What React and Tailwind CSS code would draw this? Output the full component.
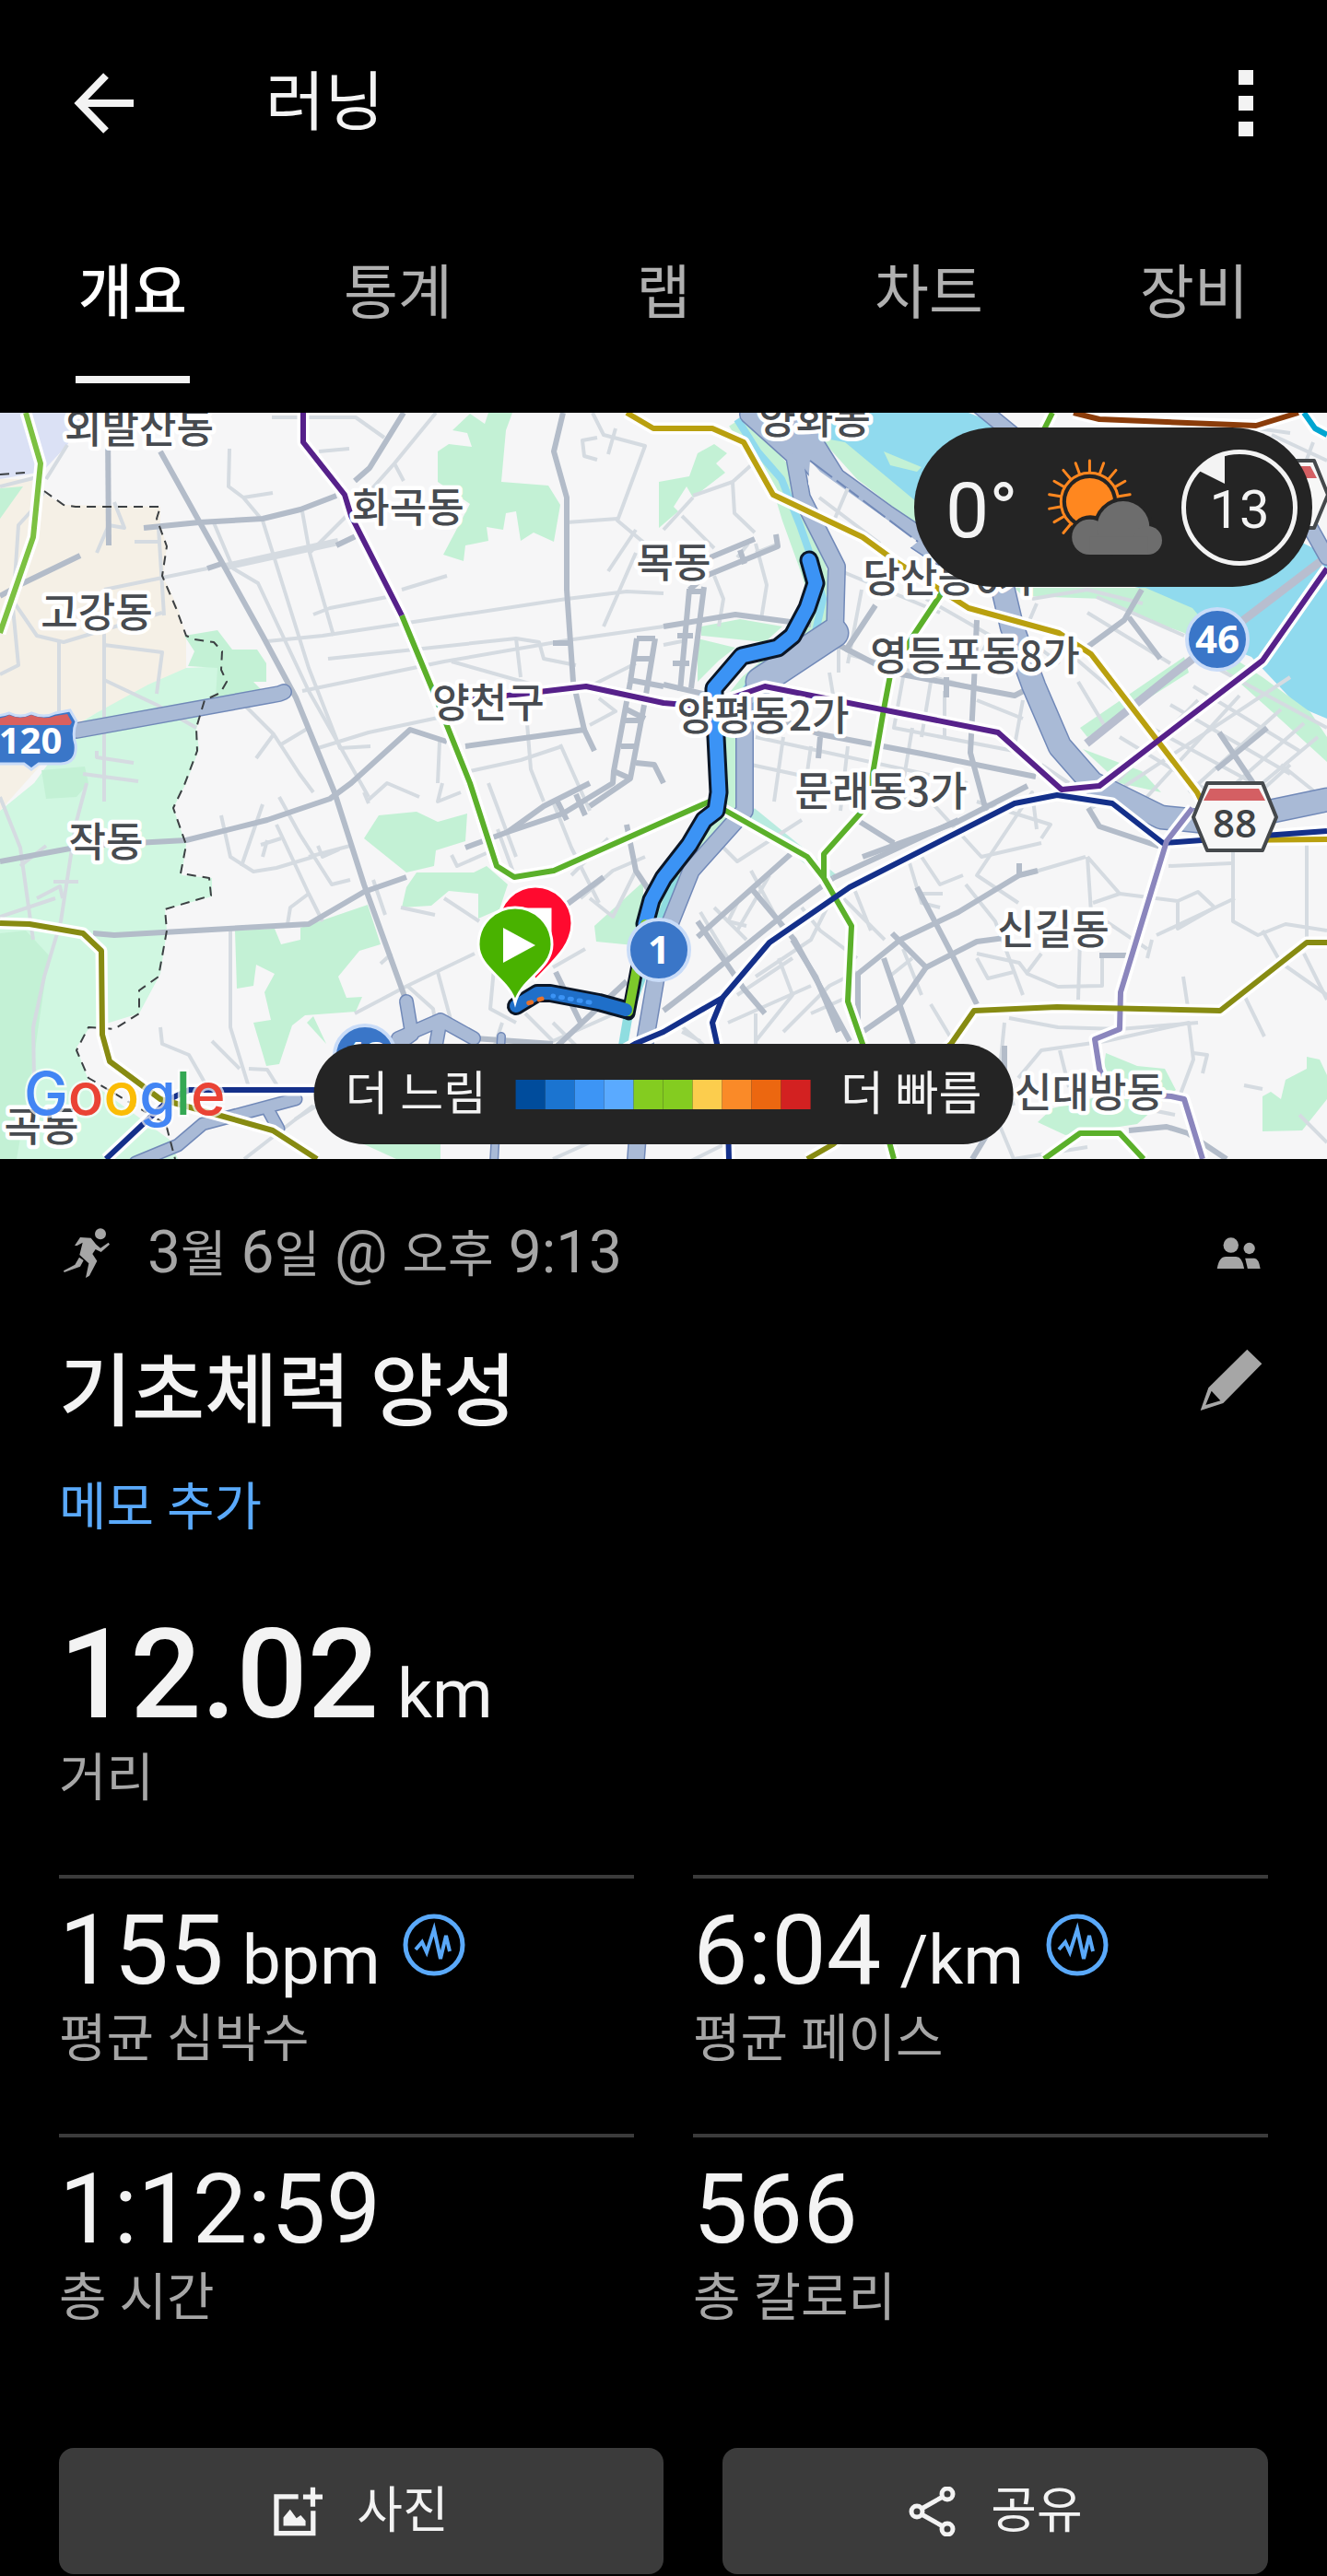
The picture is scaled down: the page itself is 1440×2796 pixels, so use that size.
import { useState } from "react";

const TABS = ["개요", "통계", "랩", "차트", "장비"];

const PACE_COLORS = [
  "#004c9c",
  "#1b74d0",
  "#3d95f5",
  "#5aaaff",
  "#84cc20",
  "#84cc20",
  "#fccd4d",
  "#fa8a28",
  "#ec6710",
  "#d32121",
];

// ---- map data (y starts at 448, the top edge of the map view) ----

const AREAS = [
  ["#dbe1f5", "0,448 92,448 73,483 46,512 0,520"],
  ["#f5f0e6", "0,520 46,520 50,537 69,548 174,550 174,570 181,593 177,627 184,640 193,660 202,690 202,730 161,747 106,773 83,787 0,880"],
  ["#d0f7e1", "161,743 202,725 248,723 239,753 216,773 213,793 216,813 202,850 188,877 202,917 197,950 230,953 230,973 179,987 181,1010 174,1057 151,1100 96,1117 83,1137 96,1173 184,1237 193,1258 0,1258 0,880 37,850 83,787 106,773"],
  ["#c3f1d5", "200,690 236,684 252,705 279,705 289,720 289,740 275,740 285,750 234,757 236,725 204,723 211,707"],
  ["#c3f1d5", "0,530 25,528 0,563"],
  ["#c3f1d5", "45,836 92,832 96,850 83,865 50,867"],
  ["#c3f1d5", "0,1013 28,1010 53,1037 34,1167 18,1258 0,1258"],
  ["#c3f1d5", "491,467 510,449 526,460 530,448 556,448 549,467 544,523 595,527 608,548 601,588 579,578 565,587 560,555 549,557 546,575 528,572 530,587 505,592 503,609 481,602 510,547 475,523 475,490 487,482 512,485 507,470"],
  ["#c3f1d5", "715,523 748,517 757,492 775,482 789,492 777,503 787,513 752,540 745,528 731,550 736,555 715,573"],
  ["#c3f1d5", "395,910 411,885 452,881 475,892 507,883 505,913 473,923 471,940 441,947"],
  ["#c3f1d5", "452,947 514,947 528,940 551,960 542,987 519,997 519,970 487,967 468,983 436,985 441,963"],
  ["#c3f1d5", "255,1010 298,1008 305,1025 326,1020 326,1007 399,982 413,1025 390,1032 367,1060 376,1083 393,1082 386,1098 331,1102 317,1113 303,1155 289,1157 275,1110 294,1107 287,1077 298,1057 278,1047 275,1070 257,1073"],
  ["#c3f1d5", "333,1110 340,1103 354,1133"],
  ["#c3f1d5", "645,1005 698,957 698,1027 647,1022"],
  ["#c3f1d5", "1200,1143 1234,1157 1264,1160 1276,1183 1234,1220 1156,1232 1126,1218 1142,1203 1193,1190"],
  ["#c3f1d5", "1370,1190 1379,1185 1390,1193 1395,1172 1418,1160 1418,1147 1432,1150 1440,1167 1440,1193 1413,1227 1370,1228"],
  ["#c3f1d5", "395,1242 478,1242 478,1258 430,1258"],
  ["#c3f1d5", "761,680 803,672 849,680 830,697 761,690"],
  ["#c3f1d5", "757,693 798,703 780,717 757,740"],
  ["#90daee", "899,448 1051,448 1115,473 1317,540 1429,597 1440,607 1440,780 1409,767 1358,713 1294,687 1243,640 1115,607 995,547 917,500 894,470"],
  ["#c3f1d5", "890,475 917,480 995,545 995,570 930,520 903,490"],
  ["#c3f1d5", "959,490 1000,507 995,512 966,505"],
  ["#c3f1d5", "1101,638 1243,638 1294,660 1340,715 1370,735 1422,773 1440,800 1440,827 1381,773 1344,740 1285,687 1239,670 1198,650 1110,647"],
  ["#c3f1d5", "1285,713 1290,730 1180,800 1172,790"],
  ["#c3f1d5", "1175,813 1239,837 1260,860 1215,850"],
];

const MINOR_ROADS = [
  "M295,453 H386 L417,475",
  "M249,487 L248,528 L264,540 L285,565 L335,725 L369,812 L402,810",
  "M264,540 L296,535 M346,490 L379,487",
  "M473,448 L428,503 L404,530 M428,503 L438,522",
  "M0,528 L44,517 M50,520 L73,483",
  "M48,533 L40,548 L20,570 L14,660 L20,722 L0,732",
  "M16,655 L40,690 L69,697 L115,683 L176,665",
  "M64,697 V775 M113,665 V870 M113,700 L176,708 L170,753",
  "M113,738 L170,765 L213,790",
  "M113,640 L225,617 M172,573 L178,668",
  "M105,600 L118,570 L135,573 L124,545 M146,588 H172",
  "M231,565 L253,617 L280,633 L335,750 L400,865",
  "M328,555 L336,600 L362,690 M336,600 L381,555",
  "M340,667 L358,660 L420,648 M436,640 L485,625",
  "M290,696 L350,690 L615,650 L680,642 L720,644",
  "M356,715 L560,693 L585,697 L590,715 L625,722",
  "M328,750 L482,718 L615,695 L720,680",
  "M490,718 L610,752 M560,693 L565,735",
  "M265,765 L297,797 L325,840 L340,860 M297,797 L278,823",
  "M345,812 L400,795 L480,778 M305,808 L335,790",
  "M660,620 L690,575 M655,680 L690,600",
  "M643,448 L655,472 L700,484 L670,565 L700,590",
  "M615,567 L670,563 M668,465 L660,493 M648,475 L632,478 L634,495 L648,499",
  "M477,805 L475,850 M572,785 L576,835 L590,870",
  "M510,837 L565,825 L610,810 M608,808 L640,880",
  "M640,787 L668,772 L650,758",
  "M690,720 L640,745 M105,815 V822 L145,828 M90,840 L150,848",
  "M94,850 L82,895 L66,1000 L48,1060 L36,1115 L37,1170",
  "M0,865 L22,920 L36,1020 M22,940 L50,918",
  "M0,995 L60,975 M40,975 L65,962 L68,975 M58,957 H85",
  "M250,1005 V1115 L270,1180 M174,1115 L176,1133 L205,1145 L225,1180",
  "M270,1160 L290,1161 L305,1185 M240,885 L250,930 L275,946 L300,942 L340,930",
  "M285,873 L262,940 M283,917 L305,910 M285,930 L290,912",
  "M300,895 L335,970 L350,1000 M335,930 L380,918",
  "M303,865 L325,905 L360,960 L380,955 M345,918 L350,930 L368,922",
  "M335,970 L315,985 L312,1003 M405,955 L418,993",
  "M435,985 L472,993 M482,975 L520,1000 M385,1100 L442,1070 L515,1035",
  "M442,1070 L470,1095 L475,1125 M475,1055 L490,1110",
  "M413,1046 L425,1035 M537,1040 L532,1095 L560,1110",
  "M545,1110 L535,1140 L590,1145 M600,1110 L630,1140",
  "M570,1100 L600,1130 L690,1090 M480,850 L475,870 L500,860",
  "M490,928 L496,940 L530,925 M540,900 L560,955",
  "M600,870 L620,920 L650,980 M620,950 L660,910",
  "M630,975 L665,945 L700,930 M640,975 L665,995 L690,945",
  "M600,1050 L635,1030 M530,850 L560,930",
  "M400,868 L420,850 L455,865 M395,860 L400,872",
  "M720,575 L752,540 M740,560 L775,595 M795,523 L797,557 L819,578",
  "M752,538 L795,523 L815,505 M720,700 L745,695",
  "M775,625 L785,650 L780,680 M820,590 L832,635 L826,672",
  "M800,605 L812,590 M845,590 L820,600",
  "M913,620 L1020,665 M935,640 L920,720 M920,710 L1050,745",
  "M900,730 L905,760 L945,770 M910,690 V730",
  "M1005,650 L1075,690 L1060,720 M1075,640 L1100,690",
  "M1120,650 L1180,640 L1240,655 M1125,655 L1110,690 L1150,720",
  "M1190,648 L1285,690 M1180,665 L1270,720",
  "M820,800 L1050,850 M815,830 L1000,870 M850,800 L840,870",
  "M880,810 L870,880 M920,810 L912,880 M990,790 L980,850",
  "M980,735 L970,790 L1100,815 L1110,760",
  "M1010,740 L1000,800 M1025,750 V800 M1060,760 L1110,780",
  "M1180,880 L1400,735 M1215,800 L1330,870 M1240,785 L1360,850",
  "M1270,765 L1400,840 M1295,745 L1410,815 M1320,725 L1440,790",
  "M1210,850 L1300,760 M1240,870 L1345,755 M1290,860 L1390,770",
  "M1330,860 L1415,785 M1370,850 L1430,800 M1150,700 L1220,760",
  "M1120,760 L1170,830 M1130,830 L1160,850 M1170,740 L1200,790",
  "M1390,830 L1440,870 M1345,880 L1400,830",
  "M1125,900 L1120,860 L1060,950 L1105,980",
  "M1060,870 L1140,895 L1130,910 M1048,960 L1080,1000 L1110,1080",
  "M1000,930 L1020,960 L1045,950 M1010,870 L1065,930 L1130,915",
  "M1180,930 L1186,1020 M1178,930 L1110,950 M1180,930 L1215,970",
  "M1186,980 L1215,970 L1278,978 L1300,968 L1318,985 L1278,1008 V978",
  "M1338,925 V1000 L1365,1015 L1395,1003 L1440,1010",
  "M1268,940 L1336,937 M1418,915 V1020 M1370,1010 L1390,1045 L1440,1080",
  "M1255,1015 L1340,975 M1250,1020 L1245,1040 M1200,1000 L1245,1030",
  "M1060,1035 L1106,1045 L1115,1057 L1148,1071 L1196,1070 V1037",
  "M1172,1020 L1170,1085 M1060,1040 L1072,1062 L1100,1055 M1115,1055 L1130,1035",
  "M1095,1105 L1148,1115 L1215,1117 L1300,1110 M1090,1110 L1085,1160 L1100,1200",
  "M1105,1170 L1130,1140 L1200,1130 L1290,1110 L1295,1150 L1280,1190",
  "M1150,1140 L1160,1180 M1295,1143 L1310,1145 L1305,1165",
  "M1284,1060 L1290,1100 M1350,1080 L1372,1125 M1415,1035 L1440,1085",
  "M1080,1210 L1100,1258 L1180,1245 M1350,1178 L1370,1182",
  "M1250,1205 L1275,1210 M1410,1210 L1440,1240",
  "M785,920 L800,935 L870,890 M760,990 L790,1040 M775,985 L810,1020",
  "M815,945 L850,1010 M835,950 L800,1010 M800,980 L790,1000 L810,1005",
  "M870,985 L890,1010 L930,1040 M905,965 L960,1020 M925,960 L945,1010",
  "M820,1060 L880,1020 L900,980 M800,1080 L860,1040 M845,1040 L860,1080 L820,1130",
  "M790,1110 L880,1070 M880,1100 L925,1080 M820,1100 V1135",
  "M850,1120 L900,1070 L930,1055 M735,1110 L770,1140 M740,1120 L760,1130",
  "M980,1030 L1000,1080 M1010,1090 L1040,1140 M965,1060 L990,1040",
  "M985,930 L1000,980 L1020,985 M1000,970 H1023",
  "M750,1260 L800,1235 M600,1258 L640,1240 M360,1190 L320,1215",
  "M265,1258 L340,1200 M230,1130 L260,1160 M300,1180 L320,1185",
  "M1380,472 L1440,500 M1425,480 L1410,520 M1330,460 L1400,470",
];

const MAJOR_ROADS = [
  "M117,467 L118,592",
  "M174,490 L239,607 L285,690 L321,757 L363,860 L395,960 L441,1087",
  "M0,935 L92,918 L202,912 L290,890 L358,867 L381,850 L445,792 L485,805",
  "M505,810 L634,792 L645,815",
  "M611,448 L601,490 L615,540 L615,640 L622,740 L634,792",
  "M156,573 L216,567 L285,563 L326,553 L365,538",
  "M385,522 L401,508 L438,448",
  "M0,647 L25,633 L87,603",
  "M365,592 L386,582 M225,617 L240,612 M600,698 H620",
  "M101,1013 L124,1015 L335,1003 L395,968 L441,952",
  "M505,920 L551,903 L611,883 L665,850 L666,837",
  "M551,903 L590,875 L640,850 M680,770 L700,780",
  "M691,693 L684,740 L666,837 L684,845",
  "M711,693 L700,760 L684,845 L640,875 M691,693 H711",
  "M687,715 H707 M683,738 L720,745 M678,782 H697 M674,810 H692 M690,828 L710,830 L720,850",
  "M605,870 L615,890 M625,862 L635,885",
  "M597,995 L655,952 M680,895 L690,945 L710,975",
  "M603,1055 L630,1110 M680,1065 L605,1135 M515,1127 L600,1133",
  "M766,607 L819,585 M766,625 L844,593 L842,580 M803,597 L808,612 M766,625 L748,640",
  "M748,640 L738,750 M764,637 L750,747 M745,642 H764 M735,690 H752 M730,720 H748",
  "M720,680 L798,667 L880,678",
  "M720,743 L780,757 L890,797 L1000,818 L1124,843",
  "M1060,673 L1057,740 L1053,817 L1070,880",
  "M910,700 L968,730 L1101,755 L1124,743",
  "M1239,640 L1220,673 L1179,703 M1225,670 L1259,715",
  "M950,657 L917,707 M1027,735 V757",
  "M890,800 L888,823 M1323,795 L1370,865 M1375,790 L1320,835",
  "M936,930 L1037,893 L1115,853 M930,890 L970,915",
  "M904,953 L1040,890",
  "M720,1097 L755,1070 L860,985 L904,953",
  "M858,927 L757,1017 M816,965 L862,1020 L895,1080 L922,1130",
  "M757,1000 L807,1073 L830,1100 M860,1020 L885,1060 L910,1120",
  "M995,963 L1030,1030 L1060,1090",
  "M1106,937 V950 L1040,990 L977,1020 L931,1057 V1117 M1106,950 L1126,945",
  "M959,1040 L991,1133 M968,1013 L1005,1050 L1060,1022 L1090,1018",
  "M1005,1050 L975,1093 L936,1120",
  "M1181,877 L1193,897 L1262,920 M1193,1037 H1230",
  "M1225,1227 L1266,1223 L1289,1230 L1331,1258",
  "M1090,1135 V1165 M1055,1258 L1075,1225",
];

const HIGHWAYS = [
  ["M812,450 L862,495 L870,540 L908,615 L906,687 L830,735 L808,760 L808,880 L750,945 L728,1000 L712,1060 L700,1130 L690,1258", 17],
  ["M820,435 L880,480 L905,520 L960,560 L1020,600 L1085,625 L1098,680 L1122,745 L1150,810 L1185,850 L1260,887 L1320,893 L1440,868", 24],
  ["M862,470 L905,525", 30],
  ["M905,687 L825,740", 30],
  ["M1055,435 L1110,480", 15],
  ["M1412,555 L1440,605", 15],
  ["M83,793 L303,753 L308,751", 15],
  ["M441,1087 L447,1123 L430,1135", 13],
  ["M432,1127 L478,1107 L514,1127 M478,1107 L472,1140", 13],
  ["M147,1262 L193,1243 L220,1220 L321,1193 M290,1203 L302,1225", 12],
  ["M544,1125 L536,1262", 7],
];

const SUBWAYS = [
  ["#7cc142", "28,448 44,503 36,583 0,687"],
  ["#b9a00f", "680,448 709,465 773,465 807,480 839,537 936,583 973,610 1051,660 1149,687 1184,710 1299,860 1325,912 1440,911"],
  ["#5bb02a", "1142,448 1130,472"],
  ["#8a3c0a", "1165,448 1193,455 1363,462 1409,448"],
  ["#00a5d1", "1415,448 1427,465 1440,472"],
  ["#5bb02a", "1023,642 991,690 966,733 959,770 947,840 936,880 894,927 894,953"],
  ["#5bb02a", "436,668 470,750 510,850 539,940 558,952 601,945 720,892 770,870 876,930 894,953 924,1005 920,1087 936,1133 970,1258"],
  ["#56218a", "482,763 636,745 720,763 766,767 830,745 1083,795 1152,857 1193,853 1370,717 1440,617"],
  ["#56218a", "329,448 329,480 374,537 381,560 436,668"],
  ["#14308a", "115,1258 184,1193 205,1183 340,1183 600,1183 689,1133 720,1120 784,1083 835,1023 922,963 1101,872 1147,863 1207,872 1262,915 1440,902"],
  ["#14308a", "784,1083 773,1110 789,1183 791,1258"],
  ["#8b86bd", "1294,877 1266,913 1216,1077 1215,1117 1188,1128 1193,1160 1203,1185 1271,1190 1285,1193 1305,1258"],
  ["#878b12", "0,1002 32,1003 90,1013 110,1032 111,1123 119,1152 174,1193 243,1212 296,1227 344,1258"],
  ["#878b12", "876,1258 904,1242 1032,1133 1057,1097 1147,1093 1324,1097 1418,1023 1440,1023"],
  ["#5bb02a", "1133,1258 1172,1230 1215,1230 1241,1258"],
];

const BORDER =
  "M0,515 L28,513 M48,533 L69,548 L82,550 H174 L170,563 L181,593 L176,625 L191,660 L202,690 L211,694 L232,697 L241,707 L240,727 L246,740 L239,752 L222,760 L213,790 L214,815 L200,852 L188,877 L202,917 L196,948 L227,953 L229,972 L179,987 L181,1010 L172,1060 L151,1075 V1100 L124,1117 L96,1115 L83,1140 L96,1170 L180,1220 L190,1258";

const PLACES = [
  ["외발산동", 151, 481],
  ["화곡동", 443, 567],
  ["고강동", 105, 681],
  ["양천구", 530, 779],
  ["목동", 731, 627],
  ["작동", 115, 930],
  ["곡동", 45, 1239],
  ["양화동", 884, 471],
  ["당산동6가", 1030, 643],
  ["영등포동8가", 1058, 728],
  ["양평동2가", 828, 793],
  ["문래동3가", 956, 875],
  ["신길동", 1143, 1025],
  ["신대방동", 1182, 1202],
];

const ROUTE =
  "M878,608 L885,633 L876,660 L860,690 L844,703 L805,712 L775,747 V760 L780,860 L777,880 L764,890 L748,917 L720,953 L707,977 L700,1003";
const ROUTE_SLOW = "M679,1096 L650,1088 L597,1078 L583,1078 L560,1092";

function RoundShield({ x, y, children }) {
  return (
    <g>
      <circle cx={x} cy={y} r="33" fill="#3a76c8" stroke="#c9dcf8" strokeWidth="4" />
      <text
        x={x}
        y={y + 15}
        textAnchor="middle"
        fill="#fff"
        className="font-['Open_Sans',sans-serif] text-[42px] font-bold"
      >
        {children}
      </text>
    </g>
  );
}

function HexShield({ x, y, children }) {
  return (
    <g transform={`translate(${x} ${y})`}>
      <path
        d="M-30,-37 H30 L45,0 L30,36 H-30 L-45,0Z"
        fill="#f7f7f7"
        stroke="#45494c"
        strokeWidth="4"
        strokeLinejoin="round"
      />
      <path d="M-27,-31 H26 L33,-18 H-34Z" fill="#d45f63" />
      <text
        y="22"
        textAnchor="middle"
        fill="#3f4346"
        className="font-['Open_Sans',sans-serif] text-[42px] font-semibold"
      >
        {children}
      </text>
    </g>
  );
}

function RouteMap() {
  return (
    <svg viewBox="0 448 1440 810" className="block w-full bg-[#f6f6f7]" aria-label="지도">
      {AREAS.map(([color, points]) => (
        <polygon key={points} points={points} fill={color} />
      ))}

      <g fill="none" strokeLinejoin="round">
        {/* stream and its banks */}
        <path
          d="M803,455 L825,490 L850,520 L862,560 L880,610 L893,650 L882,690 L850,715 L815,745 L795,770 L792,850 L780,890 L730,960 L712,1010"
          stroke="#c3f1d5"
          strokeWidth="28"
        />
        <path
          d="M800,455 L822,490 L848,520 L868,570 L882,610 L893,650 L884,690 L850,712 L815,740 L798,765"
          stroke="#90daee"
          strokeWidth="8"
        />
        <path d="M735,950 L718,995 L700,1050 L682,1100 L676,1135" stroke="#8fdde0" strokeWidth="10" />
        <path d="M815,882 L880,935 L905,955" stroke="#b9ebe0" strokeWidth="12" />

        <g stroke="#d5dbe1" strokeWidth="4">
          {MINOR_ROADS.map((d) => (
            <path key={d} d={d} />
          ))}
        </g>
        <path d="M245,615 L367,588" stroke="#d5dbe1" strokeWidth="8" />
        <g stroke="#b3bcc9" strokeWidth="6">
          {MAJOR_ROADS.map((d) => (
            <path key={d} d={d} />
          ))}
        </g>
        <path d="M1436,607 L1271,733 L1179,807" stroke="#b8becf" strokeWidth="9" />

        {/* expressways: outline first, then fill */}
        {HIGHWAYS.map(([d, w]) => (
          <path key={d} d={d} stroke="#7189b8" strokeWidth={w + 3} strokeLinecap="round" />
        ))}
        {HIGHWAYS.map(([d, w]) => (
          <path key={d} d={d} stroke="#a9bad6" strokeWidth={w} strokeLinecap="round" />
        ))}
        {/* blocks between the two carriageways */}
        <path
          d="M879,500 L890,512 L996,588 L975,605 L930,578 L893,560 L877,525Z"
          fill="#f6f6f7"
        />
        <path d="M879,500 L996,588" stroke="#7189b8" strokeWidth="2" strokeDasharray="30 6" />
        <path d="M889,540 L955,590 M920,530 L905,565" stroke="#d5dbe1" strokeWidth="4" />

        <path d={BORDER} stroke="#3c4043" strokeWidth="2" strokeDasharray="10 7" />

        {SUBWAYS.map(([, points]) => (
          <polyline key={points} points={points} stroke="#fff" strokeWidth="13" />
        ))}
        {SUBWAYS.map(([color, points]) => (
          <polyline key={points} points={points} stroke={color} strokeWidth="6" />
        ))}

        {/* recorded route */}
        <g strokeLinecap="round">
          <path d={ROUTE} stroke="#0b1626" strokeWidth="21" />
          <path d="M701,1000 L682,1100" stroke="#0b1626" strokeWidth="15" />
          <path d={ROUTE_SLOW} stroke="#0b1626" strokeWidth="20" />
          <path d={ROUTE} stroke="#3b93f5" strokeWidth="15" />
          <path d="M700,1003 L682,1098" stroke="#7cc92b" strokeWidth="10" />
          <path d={ROUTE_SLOW} stroke="#1f6fc9" strokeWidth="14" />
          <path d="M640,1088 L600,1081" stroke="#3b93f5" strokeWidth="5" strokeDasharray="2 8" />
          <path d="M588,1084 L570,1090" stroke="#e8722a" strokeWidth="5" strokeDasharray="3 9" />
        </g>
      </g>

      {PLACES.map(([name, x, y]) => (
        <text
          key={name}
          x={x}
          y={y}
          textAnchor="middle"
          fill="#474b50"
          stroke="#fff"
          strokeWidth="9"
          strokeLinejoin="round"
          paintOrder="stroke"
          className="font-['Noto_Sans_CJK_KR',sans-serif] text-[44px] font-medium"
        >
          {name}
        </text>
      ))}

      {/* road shields */}
      <path
        d="M-14,776 Q0,778 10,774 Q22,780 34,774 Q48,780 60,774 L76,771 L83,783 Q78,795 82,808 Q84,828 66,829 L42,829 L34,835 L26,829 H-14Z"
        fill="#3a76c8"
        stroke="#c9dcf8"
        strokeWidth="3"
      />
      <path d="M-14,778 Q0,782 10,776 Q22,782 34,776 Q48,782 60,777 L73,775 L78,784 L76,787 H-14Z" fill="#d9605f" />
      <text
        x="33"
        y="818"
        textAnchor="middle"
        fill="#fff"
        className="font-['Open_Sans',sans-serif] text-[40px] font-bold"
      >
        120
      </text>
      <RoundShield x={1321} y={694}>46</RoundShield>
      <RoundShield x={715} y={1031}>1</RoundShield>
      <RoundShield x={396} y={1146}>42</RoundShield>
      <HexShield x={1396} y={537} />
      <HexShield x={1340} y={887}>88</HexShield>

      {/* finish and start pins */}
      <g stroke="#fff" strokeWidth="3">
        <path d="M581,1064 C568,1038 541,1022 541,1002 A40,40 0 0 1 621,1002 C621,1026 602,1042 581,1064Z" fill="#ff0a2f" />
        <path d="M566,987 H597 V1018 H566Z" fill="#fff" />
        <path d="M559,1088 C552,1062 519,1052 519,1025 A40,40 0 0 1 599,1025 C599,1052 566,1062 559,1088Z" fill="#49b200" />
      </g>
      <path d="M546,1007 L581,1026 L546,1045Z" fill="#fff" />

      <text
        x="26"
        y="1210"
        stroke="#fff"
        strokeWidth="5"
        strokeOpacity="0.7"
        paintOrder="stroke"
        className="font-['Inter',sans-serif] text-[64px] font-medium"
      >
        <tspan fill="#4285f4">G</tspan>
        <tspan fill="#ea4335">o</tspan>
        <tspan fill="#fbbc05">o</tspan>
        <tspan fill="#4285f4">g</tspan>
        <tspan fill="#34a853">l</tspan>
        <tspan fill="#ea4335">e</tspan>
      </text>
    </svg>
  );
}

function PartlyCloudyIcon() {
  const rays = [-140, -120, -100, -80, -60, -40, -20, 0, 20, 40, 60, 80];
  return (
    <svg viewBox="455 145 380 318" className="w-[126px]" aria-hidden="true">
      <g stroke="#ff871f" strokeWidth="9" strokeLinecap="round" fill="none">
        <circle cx="595" cy="285" r="94" />
        {rays.map((a) => (
          <path key={a} d="M595,188 V151" transform={`rotate(${a} 595 285)`} />
        ))}
      </g>
      <circle cx="595" cy="285" r="77" fill="#ff871f" />
      {/* dark gap between sun and cloud */}
      <g fill="#242424">
        <circle cx="597" cy="400" r="70" />
        <circle cx="705" cy="370" r="98" />
      </g>
      <g fill="#6d6d6d">
        <circle cx="595" cy="401" r="58" />
        <circle cx="705" cy="370" r="86" />
        <circle cx="785" cy="412" r="47" />
        <path d="M595,400 H785 V459 H595Z" />
      </g>
    </svg>
  );
}

function WeatherPill() {
  return (
    <div className="absolute top-4 right-4 flex h-[173px] items-center gap-5 rounded-full bg-[#242424] pr-4 pl-[34px]">
      <span className="w-[90px] pt-2 text-[84px] leading-none">0°</span>
      <PartlyCloudyIcon />
      <div className="relative flex size-[126px] items-center justify-center rounded-full border-[5px] border-[#f3f3f3]">
        <svg viewBox="0 0 126 126" className="absolute -inset-[5px]" aria-hidden="true">
          <path d="M19,23 Q30,8 47,4 V37Z" fill="#f3f3f3" />
        </svg>
        <span className="pt-1 text-[58px] leading-none">13</span>
      </div>
    </div>
  );
}

function PaceLegend() {
  return (
    <div className="absolute bottom-4 left-1/2 flex h-[109px] -translate-x-1/2 items-center gap-8 rounded-full bg-[#242424] px-[34px] text-[51px] leading-none whitespace-nowrap">
      <span>더 느림</span>
      <div className="flex h-8">
        {PACE_COLORS.map((color, i) => (
          <div key={i} className="w-8" style={{ backgroundColor: color }}></div>
        ))}
      </div>
      <span>더 빠름</span>
    </div>
  );
}

function PulseIcon() {
  return (
    <svg
      viewBox="-34 -34 68 68"
      className="size-[68px]"
      fill="none"
      stroke="#5aa9fa"
      strokeWidth="5"
      aria-hidden="true"
    >
      <circle r="31" />
      <path d="M-20,5 L-13,-3 L-8,8 L0,-17 L7,15 L13,-10 L17,7" strokeWidth="4" />
    </svg>
  );
}

function Stat({ value, unit, label, pulse }) {
  return (
    <div className="border-t-4 border-[#3b3b3b] pt-[22px]">
      <div className="flex h-28 gap-6">
        <p className="text-[106px] leading-[112px] whitespace-nowrap">
          {value}
          {unit && <span className="ml-5 text-[75px] leading-none">{unit}</span>}
        </p>
        {pulse && (
          <div className="pt-4">
            <PulseIcon />
          </div>
        )}
      </div>
      <p className="mt-1 text-[56px] leading-[72px] text-[#a6a6a6]">{label}</p>
    </div>
  );
}

export default function App() {
  const [tab, setTab] = useState("개요");

  return (
    <div className="min-h-screen bg-black pb-0.5 font-['Roboto','Noto_Sans_CJK_KR',sans-serif] text-[#f3f3f3]">
      <header className="flex h-56 items-center px-20">
        <button aria-label="뒤로">
          <svg viewBox="0 0 66 66" className="size-[66px]" fill="none" stroke="#f3f3f3" strokeWidth="8">
            <path d="M35,3 L6,33 L35,63 M6,33 H65" />
          </svg>
        </button>
        <h1 className="ml-[142px] flex-1 text-[70px] leading-none">러닝</h1>
        <button aria-label="더보기" className="flex flex-col gap-3">
          <span className="size-4 bg-[#f3f3f3]"></span>
          <span className="size-4 bg-[#f3f3f3]"></span>
          <span className="size-4 bg-[#f3f3f3]"></span>
        </button>
      </header>

      <nav role="tablist" className="flex h-56 justify-between px-[82px] pb-8">
        {TABS.map((name) => (
          <button
            key={name}
            role="tab"
            aria-selected={tab === name}
            onClick={() => setTab(name)}
            className={`w-[124px] border-b-8 pt-1.5 text-[64px] leading-none ${
              tab === name ? "border-[#f3f3f3] font-medium text-white" : "border-transparent text-[#b0b0b0]"
            }`}
          >
            {name}
          </button>
        ))}
      </nav>

      <section className="relative overflow-hidden">
        <RouteMap />
        <WeatherPill />
        <PaceLegend />
      </section>

      <main className="px-16 pt-[54px]">
        <div className="flex h-24 items-center text-[#a6a6a6]">
          <svg viewBox="60 62 162 168" className="h-[56px] w-[60px]" fill="currentColor" aria-hidden="true">
            <circle cx="186" cy="84" r="18" />
            <path d="M120,95 L155,97 L172,118 L186,130 L212,112 L216,118 L188,143 L170,134 L160,149 L175,172 L150,220 L138,227 L148,180 L118,152 L128,112 L110,122 L102,122Z" />
            <path d="M117,160 L131,170 L120,190 L68,209 L66,204 L103,184Z" />
          </svg>
          <p className="ml-9 flex-1 text-[64px] leading-none">
            3<span className="text-[54px]">월</span> 6<span className="text-[54px]">일</span> @{" "}
            <span className="text-[54px]">오후</span> 9:13
          </p>
          <svg viewBox="152 68 140 102" className="mr-2 w-[48px]" fill="currentColor" aria-hidden="true">
            <circle cx="198" cy="93" r="24" />
            <path d="M154,168 Q160,129 182,129 H214 Q234,129 240,168Z" />
            <circle cx="256" cy="103" r="18" />
            <path d="M243,134 H272 Q286,134 291,168 H251Z" />
          </svg>
        </div>

        <div className="mt-12 flex h-28 items-center">
          <h2 className="flex-1 text-[86px] leading-none font-medium">기초체력 양성</h2>
          <button aria-label="편집" className="mr-1.5 pb-7">
            <svg viewBox="96 436 204 202" className="size-[68px]" fill="#a6a6a6">
              <path
                fillRule="evenodd"
                d="M250,437 L298,484 L172,612 L98,636 L124,562Z M134,572 L115,618 L163,604Z"
              />
            </svg>
          </button>
        </div>

        <button className="mt-[26px] block h-20 pt-1 text-[56px] leading-none text-[#5aa9fa]">메모 추가</button>

        <p className="mt-[72px] text-[136px] leading-[144px] font-medium">
          12.02
          <span className="ml-5 text-[75px] leading-none font-normal">km</span>
        </p>
        <p className="mt-1 text-[56px] leading-[72px] text-[#a6a6a6]">거리</p>

        <div className="mt-[69px] grid grid-cols-2 gap-x-16 gap-y-[67px]">
          <Stat value="155" unit="bpm" label="평균 심박수" pulse />
          <Stat value="6:04" unit="/km" label="평균 페이스" pulse />
          <Stat value="1:12:59" label="총 시간" />
          <Stat value="566" label="총 칼로리" />
        </div>

        <div className="mt-[127px] flex gap-16 text-[54px] leading-none">
          <button className="flex h-[137px] flex-[41] items-center justify-center gap-9 rounded-2xl bg-[#3b3b3b]">
            <svg viewBox="62 79 164 162" className="size-[54px]" fill="none" stroke="#f3f3f3" strokeWidth="16">
              <path d="M143,111 H71 V232 H192 V158 M191,80 V144 M159,112 H223" />
              <path d="M94,207 V180 L116,153 L137,182 L151,172 L167,190 V207Z" fill="#f3f3f3" stroke="none" />
            </svg>
            사진
          </button>
          <button className="flex h-[137px] flex-[37] items-center justify-center gap-9 rounded-2xl bg-[#3b3b3b]">
            <svg viewBox="0 0 54 54" className="size-[54px]" fill="none" stroke="#f3f3f3" strokeWidth="5">
              <circle cx="43" cy="8" r="6" />
              <circle cx="10" cy="27" r="6" />
              <circle cx="43" cy="46" r="6" />
              <path d="M15,24 L38,11 M15,30 L38,43" />
            </svg>
            공유
          </button>
        </div>
      </main>
    </div>
  );
}
